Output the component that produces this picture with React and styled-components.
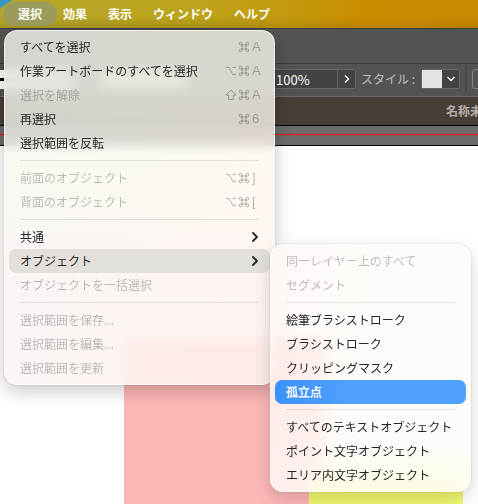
import React from "react";
import styled, { createGlobalStyle, css } from "styled-components";

const menuBarItems = ["選択", "効果", "表示", "ウィンドウ", "ヘルプ"];

const objectMenu = [
  { label: "同一レイヤー上のすべて", disabled: true },
  { label: "セグメント", disabled: true },
  { separator: true },
  { label: "絵筆ブラシストローク" },
  { label: "ブラシストローク" },
  { label: "クリッピングマスク" },
  { label: "孤立点", selected: true },
  { separator: true },
  { label: "すべてのテキストオブジェクト" },
  { label: "ポイント文字オブジェクト" },
  { label: "エリア内文字オブジェクト" },
];

const selectMenu = [
  { label: "すべてを選択", keys: ["command", "A"] },
  { label: "作業アートボードのすべてを選択", keys: ["option", "command", "A"] },
  { label: "選択を解除", keys: ["shift", "command", "A"], disabled: true },
  { label: "再選択", keys: ["command", "6"] },
  { label: "選択範囲を反転" },
  { separator: true },
  { label: "前面のオブジェクト", keys: ["option", "command", "]"], disabled: true },
  { label: "背面のオブジェクト", keys: ["option", "command", "["], disabled: true },
  { separator: true },
  { label: "共通", hasSubmenu: true },
  { label: "オブジェクト", hasSubmenu: true, open: true, submenu: objectMenu },
  { label: "オブジェクトを一括選択", disabled: true },
  { separator: true },
  { label: "選択範囲を保存...", disabled: true },
  { label: "選択範囲を編集...", disabled: true },
  { label: "選択範囲を更新", disabled: true },
];

const keyPaths = {
  command:
    "M4 4h4v4H4zM4 4V2.6A1.4 1.4 0 1 0 2.6 4H4M8 4h1.4A1.4 1.4 0 1 0 8 2.6V4M8 8v1.4A1.4 1.4 0 1 0 9.4 8H8M4 8H2.6A1.4 1.4 0 1 0 4 9.4V8",
  option: "M1 2.5h3l4 7h3M7.5 2.5H11",
  shift: "M6 1L11 6.2H8.3V10.5H3.7V6.2H1z",
};

const KeyIcon = ({ name }) => (
  <svg width="12" height="12" viewBox="0 0 12 12" fill="none" stroke="currentColor" aria-hidden="true">
    <path d={keyPaths[name]} strokeLinejoin="round" />
  </svg>
);

const Menu = ({ items, label, nested }) => (
  <MenuPanel role="menu" aria-label={label} $nested={nested}>
    {items.map((item, index) =>
      item.separator ? (
        <Separator key={index} role="separator" />
      ) : (
        <MenuRow key={index} role="none">
          <MenuButton
            type="button"
            role="menuitem"
            disabled={item.disabled}
            aria-haspopup={item.hasSubmenu ? "menu" : undefined}
            aria-expanded={item.hasSubmenu ? Boolean(item.open) : undefined}
            $open={item.open}
            $selected={item.selected}
          >
            <span>{item.label}</span>
            {item.keys && (
              <Shortcut>
                {item.keys.map((key) =>
                  keyPaths[key] ? <KeyIcon key={key} name={key} /> : <KeyChar key={key}>{key}</KeyChar>
                )}
              </Shortcut>
            )}
            {item.hasSubmenu && (
              <svg width="7" height="12" viewBox="0 0 7 12" fill="none" stroke="currentColor" strokeWidth="1.8" aria-hidden="true">
                <path d="M1 2l4 4-4 4" strokeLinecap="round" strokeLinejoin="round" />
              </svg>
            )}
          </MenuButton>
          {item.submenu && <Menu items={item.submenu} label={item.label} nested />}
        </MenuRow>
      )
    )}
  </MenuPanel>
);

const App = () => (
  <>
    <GlobalStyle />
    <Page>
      <MenuBar>
        {menuBarItems.map((item, index) => (
          <MenuBarButton key={item} type="button" $active={index === 0}>
            {item}
          </MenuBarButton>
        ))}
        <Menu items={selectMenu} label="選択" />
      </MenuBar>

      <AppBar />

      <ControlBar>
        <StrokePreview />
        <BrushPreview />
        <Opacity>
          <OpacityInput aria-label="不透明度" defaultValue="100%" />
          <ArrowButton type="button" aria-label="不透明度の設定">
            <svg width="6" height="10" viewBox="0 0 6 10" fill="none" stroke="currentColor" strokeWidth="1.3">
              <path d="M1 1.5L4.5 5L1 8.5" />
            </svg>
          </ArrowButton>
        </Opacity>
        <StyleLabel>スタイル :</StyleLabel>
        <StylePicker type="button" aria-label="スタイル">
          <StyleSwatch />
          <StyleArrow>
            <svg width="8" height="6" viewBox="0 0 8 6" fill="none" stroke="currentColor" strokeWidth="1.3">
              <path d="M0.5 1L4 4.5L7.5 1" />
            </svg>
          </StyleArrow>
        </StylePicker>
        <Divider />
        <SetupButton type="button" aria-label="ドキュメント設定" />
      </ControlBar>

      <TabBar>
        <TabTitle>名称未</TabTitle>
      </TabBar>

      <Ruler />

      <Canvas>
        <PinkShape />
        <YellowShape />
      </Canvas>
    </Page>
  </>
);

export default App;

const GlobalStyle = createGlobalStyle`
  * {
    box-sizing: border-box;
  }
  body {
    margin: 0;
    overflow: hidden;
    font-family: "Noto Sans CJK JP", sans-serif;
    font-size: 12px;
    line-height: 16px;
  }
  button, input {
    font: inherit;
    border: 0;
    padding: 0;
    margin: 0;
    background: none;
    color: inherit;
  }
`;

const Page = styled.div`
  display: flex;
  flex-direction: column;
  min-height: 100vh;
  overflow: hidden;
  background: #535353;
`;

const MenuBar = styled.nav`
  position: relative;
  z-index: 1;
  display: flex;
  align-items: center;
  gap: 21px;
  height: 28px;
  padding: 0 18px;
  background:
    linear-gradient(to bottom, transparent 60%, rgba(90, 70, 0, 0.16)),
    linear-gradient(145deg, #3a96c4 6px, transparent 8px),
    linear-gradient(100deg, #b4a62c 0%, #bda41c 40%, #c4980c 62%, #cc8c00 76%, #c88a04 100%);
`;

const MenuBarButton = styled.button`
  height: 24px;
  margin-bottom: 1px;
  color: #fff;
  font-weight: 700;
  white-space: nowrap;

  ${({ $active }) =>
    $active &&
    css`
      padding: 0 15px;
      margin-left: -15px;
      margin-right: -15px;
      border-radius: 12px;
      background: #9b9c5c;
    `}
`;

/* the glass sits on ::before so that a nested panel can still blur the page */
const MenuPanel = styled.ul`
  position: absolute;
  z-index: 2;
  top: ${({ $nested }) => ($nested ? "-5px" : "30px")};
  left: ${({ $nested }) => ($nested ? "261px" : "4px")};
  width: ${({ $nested }) => ($nested ? "201px" : "271px")};
  margin: 0;
  padding: 5px;
  list-style: none;
  color: #262626;

  &::before {
    content: "";
    position: absolute;
    z-index: -1;
    inset: 0;
    border-radius: 13px;
    background: ${({ $nested }) =>
      $nested
        ? "linear-gradient(100deg, rgba(255, 247, 245, 0.8), rgba(254, 251, 247, 0.86) 40%)"
        : `linear-gradient(to bottom, rgba(255, 244, 228, 0) 26%, rgba(255, 246, 230, 0.4) 38%, rgba(255, 240, 238, 0.5) 64%),
           linear-gradient(to bottom, rgba(228, 225, 214, 0.5) 24%, rgba(228, 225, 214, 0) 34%),
           linear-gradient(100deg, rgba(240, 250, 248, 0.72), rgba(255, 249, 242, 0.72))`};
    backdrop-filter: blur(6px);
    box-shadow:
      inset 0 0 1px 1px rgba(255, 255, 255, 0.7),
      0 0 1px rgba(0, 0, 0, 0.5),
      0 6px 18px rgba(0, 0, 0, ${({ $nested }) => ($nested ? 0.16 : 0.22)});
  }
`;

const MenuRow = styled.li`
  position: relative;
`;

const MenuButton = styled.button`
  display: flex;
  align-items: center;
  justify-content: space-between;
  width: 100%;
  height: 24px;
  padding: 0 11px;
  border-radius: 7px;
  text-align: left;
  white-space: nowrap;

  &:disabled {
    color: rgba(0, 0, 0, 0.26);
  }

  ${({ $open }) =>
    $open &&
    css`
      background: #e3e0db;
    `}

  ${({ $selected }) =>
    $selected &&
    css`
      background: linear-gradient(90deg, #3a92ff, #52a0ff 40%);
      color: #fff;
      font-weight: 700;
    `}
`;

const Shortcut = styled.span`
  display: flex;
  align-items: center;
  gap: 1px;
  color: rgba(0, 0, 0, 0.28);
`;

const KeyChar = styled.span`
  width: 7px;
  margin-left: 1px;
  font-family: "Liberation Sans", sans-serif;
  font-size: 13px;
`;

const Separator = styled.li`
  height: 1px;
  margin: 5px 11px;
  background: rgba(0, 0, 0, 0.1);
`;

const AppBar = styled.header`
  height: 36px;
  border-top: 1px solid #3c3c3c;
  border-bottom: 1px solid #3c3c3c;
  background: #535353;
`;

const ControlBar = styled.div`
  display: flex;
  align-items: center;
  height: 33px;
  padding-bottom: 2px;
  border-bottom: 1px solid #6a6a6a;
  background: #535353;
  color: #fff;
`;

const StrokePreview = styled.div`
  flex: none;
  width: 75px;
  height: 19px;
  border: solid #fff;
  border-width: 8px 0;
  background: #000;
`;

const BrushPreview = styled.div`
  flex: none;
  width: 87px;
  height: 18px;
  margin-left: 25px;
  background: #dcdac8;
`;

const Opacity = styled.div`
  display: flex;
  flex: none;
  width: 86px;
  height: 20px;
  margin-left: 83px;
  border: 1px solid #666;
  border-radius: 2px;
  background: #434343;
`;

const OpacityInput = styled.input`
  flex: 1;
  min-width: 0;
  padding-left: 5px;
  padding-top: 2px;
  font-size: 13px;
`;

const ArrowButton = styled.button`
  display: grid;
  place-items: center;
  width: 18px;
  border-left: 1px solid #666;
`;

const StyleLabel = styled.span`
  flex: none;
  width: 60px;
  margin-left: 5px;
  color: #c0c0c0;
`;

const StylePicker = styled.button`
  display: flex;
  flex: none;
  width: 39px;
  height: 20px;
  border: 1px solid #666;
  border-radius: 2px;
  background: #434343;
`;

const StyleSwatch = styled.span`
  width: 20px;
  height: 18px;
  background: #e4e4e4;
`;

const StyleArrow = styled.span`
  display: grid;
  flex: 1;
  height: 18px;
  place-items: center;
`;

const Divider = styled.span`
  flex: none;
  width: 2px;
  height: 26px;
  margin: 0 5px;
  background: #494949;
`;

const SetupButton = styled.button`
  flex: none;
  width: 90px;
  height: 20px;
  border: 1px solid #858585;
  border-radius: 3px;
`;

const TabBar = styled.div`
  display: flex;
  align-items: center;
  height: 28px;
  padding-left: 446px;
  overflow: hidden;
  background: #483e38;
`;

const TabTitle = styled.span`
  color: #b5aeaa;
  font-weight: 700;
  white-space: nowrap;
`;

const Ruler = styled.div`
  height: 21px;
  border-top: 1px solid #000;
  border-bottom: 1px solid #000;
  background: linear-gradient(#f00, #f00) 0 8px / 100% 1px no-repeat #6b6b6b;
`;

const Canvas = styled.main`
  position: relative;
  flex: 1;
  overflow: hidden;
  background: #fff;
`;

const PinkShape = styled.div`
  position: absolute;
  top: 192px;
  left: 124px;
  width: 201px;
  height: 340px;
  background: #fdb7b7;
`;

const YellowShape = styled.div`
  position: absolute;
  top: 312px;
  left: 309px;
  width: 154px;
  height: 160px;
  background: linear-gradient(to bottom, rgba(240, 248, 112, 0.2), #f0f870 32px);
`;
